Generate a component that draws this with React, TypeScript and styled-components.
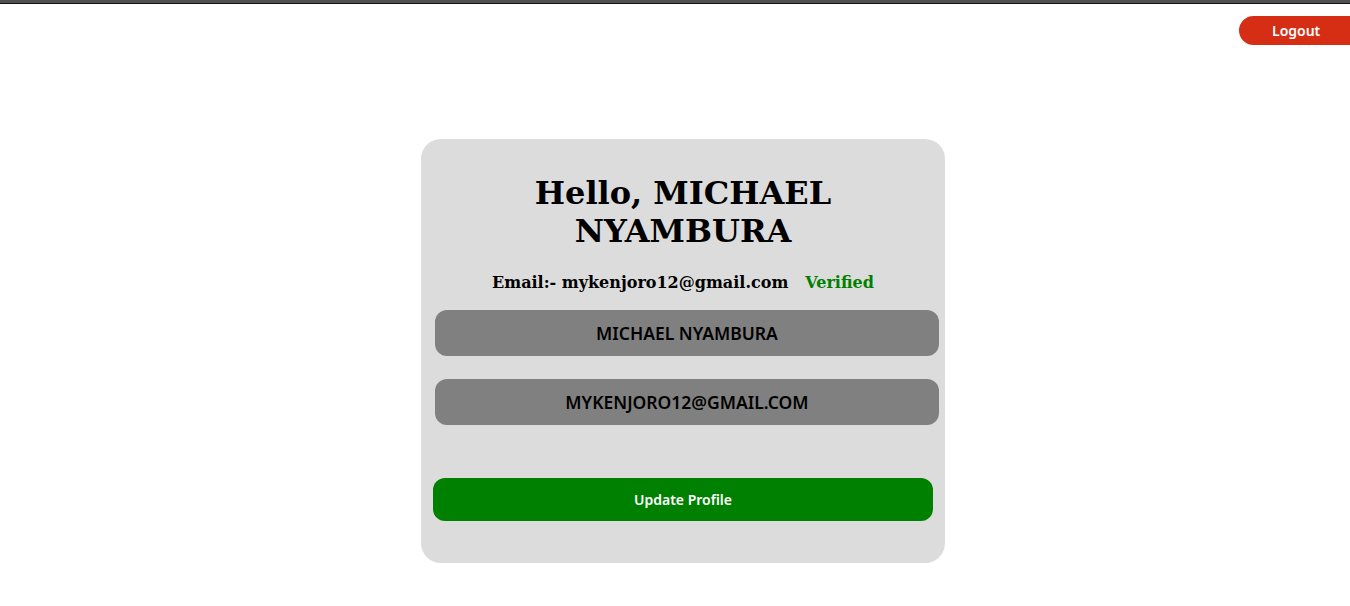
import React, { useState } from 'react';
import styled, { createGlobalStyle } from 'styled-components';

const GlobalStyle = createGlobalStyle`
  body {
    margin: 0;
    background: #ffffff;
    font-family: "DejaVu Serif", serif;
  }
`;

const TopBar = styled.div`
  height: 3px;
  background-color: #505050;
  border-bottom: 1px solid #111111;
`;

const Header = styled.div`
  display: flex;
  justify-content: flex-end;
  padding-top: 12px;
`;

const LogoutButton = styled.button`
  width: 124px;
  height: 29px;
  margin-right: -13px;
  border: none;
  border-radius: 15px;
  background-color: #d62d15;
  color: #ffffff;
  font-family: "Noto Sans", sans-serif;
  font-weight: 600;
  font-size: 14px;
  text-align: left;
  padding: 0 0 0 33px;
  cursor: pointer;
`;

const Page = styled.div`
  display: flex;
  justify-content: center;
  padding-top: 94px;
  padding-left: 16px;
`;

const ProfileCard = styled.div`
  width: 524px;
  height: 424px;
  box-sizing: border-box;
  background-color: #dcdcdc;
  border-radius: 20px;
  padding-top: 35px;
  display: flex;
  flex-direction: column;
  align-items: flex-start;
`;

const Heading = styled.h1`
  margin: 0;
  align-self: center;
  width: 320px;
  text-align: center;
  font-size: 32px;
  line-height: 38px;
  font-weight: bold;
  color: #000000;
`;

const EmailRow = styled.div`
  margin-top: 22px;
  align-self: center;
  display: flex;
  gap: 17px;
  font-size: 16px;
  font-weight: bold;
  line-height: 22px;
`;

const Verified = styled.span`
  color: #008000;
`;

const Field = styled.input<{ $first?: boolean }>`
  width: 504px;
  height: 46px;
  box-sizing: border-box;
  margin: ${p => (p.$first ? '16px' : '23px')} 0 0 14px;
  border: none;
  border-radius: 12px;
  background-color: #808080;
  color: #000000;
  text-align: center;
  text-transform: uppercase;
  font-family: "Noto Sans", sans-serif;
  font-weight: 600;
  font-size: 17.5px;
  outline: none;
`;

const UpdateButton = styled.button`
  width: 500px;
  height: 43px;
  margin: 53px 0 0 12px;
  border: none;
  border-radius: 12px;
  background-color: #008000;
  color: #ffffff;
  font-family: "Noto Sans", sans-serif;
  font-weight: 600;
  font-size: 14px;
  cursor: pointer;
`;

const App: React.FC = () => {
  const [name, setName] = useState('MICHAEL NYAMBURA');
  const [email, setEmail] = useState('mykenjoro12@gmail.com');

  return (
    <>
      <GlobalStyle />
      <TopBar />
      <Header>
        <LogoutButton>Logout</LogoutButton>
      </Header>
      <Page>
        <ProfileCard>
          <Heading>Hello, MICHAEL NYAMBURA</Heading>
          <EmailRow>
            <span>Email:- {email}</span>
            <Verified>Verified</Verified>
          </EmailRow>
          <Field $first value={name} onChange={e => setName(e.target.value)} />
          <Field value={email} onChange={e => setEmail(e.target.value)} />
          <UpdateButton>Update Profile</UpdateButton>
        </ProfileCard>
      </Page>
    </>
  );
};

export default App;
